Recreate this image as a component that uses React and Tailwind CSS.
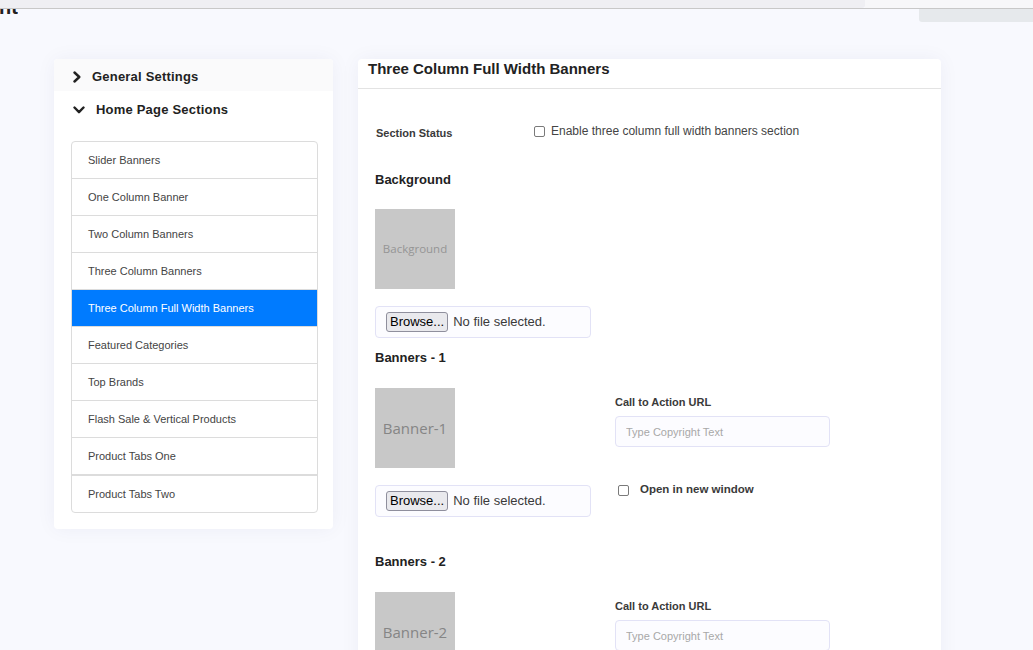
import React from "react";

const sections = [
  "Slider Banners",
  "One Column Banner",
  "Two Column Banners",
  "Three Column Banners",
  "Three Column Full Width Banners",
  "Featured Categories",
  "Top Brands",
  "Flash Sale & Vertical Products",
  "Product Tabs One",
  "Product Tabs Two",
];

function ChevronRight() {
  return (
    <svg width="8" height="12" viewBox="0 0 8 12" fill="none">
      <polyline points="1.5,1.5 6.3,6 1.5,10.5" stroke="#222" strokeWidth="2.4" strokeLinecap="round" strokeLinejoin="round" />
    </svg>
  );
}

function ChevronDown() {
  return (
    <svg width="12" height="8" viewBox="0 0 12 8" fill="none">
      <polyline points="1.5,1.5 6,6.2 10.5,1.5" stroke="#222" strokeWidth="2.4" strokeLinecap="round" strokeLinejoin="round" />
    </svg>
  );
}

function FileBox() {
  return (
    <div className="w-[216px] h-[32px] flex items-center pl-[10px] border border-[#e2e2f6] rounded-[4px] bg-[#fcfcff]">
      <span className="h-[20px] px-[3px] flex items-center border border-[#8f8f9d] rounded-[3px] bg-[#e9e9ed] text-[13px] text-black">
        Browse...
      </span>
      <span className="ml-[5px] text-[13px] text-[#3a3a3a]">No file selected.</span>
    </div>
  );
}

function Placeholder({ label, big }) {
  return (
    <div
      className={`w-[80px] h-[80px] bg-[#c8c8c8] flex items-center justify-center font-['Open_Sans'] ${
        big ? "text-[15px] text-[#858585]" : "text-[11.5px] text-[#959595]"
      }`}
    >
      {label}
    </div>
  );
}

function Checkbox() {
  return <span className="w-[11px] h-[11px] border border-[#7a7a7a] rounded-[2px] bg-white shrink-0" />;
}

function BannerBlock({ n }) {
  return (
    <div className="grid grid-cols-[240px_1fr]">
      <Placeholder label={`Banner-${n}`} big />
      <div className="pt-[7px]">
        <div className="text-[11px] leading-[14px] font-bold text-[#3a3a3a]">Call to Action URL</div>
        <input
          placeholder="Type Copyright Text"
          className="mt-[7px] w-[215px] h-[31px] pl-[10px] border border-[#e2e2f6] rounded-[4px] bg-[#fcfcff] text-[11px] placeholder:text-[#a8a8a8] outline-none"
        />
      </div>
      <div className="mt-[17px]">
        <FileBox />
      </div>
      <div className="mt-[17px] pl-[3px] h-[10px] flex items-center">
        <Checkbox />
        <span className="ml-[11px] text-[11.5px] font-bold text-[#3a3a3a]">Open in new window</span>
      </div>
    </div>
  );
}

export default function App() {
  return (
    <div className="min-h-screen bg-[#f8f9fe] font-['Liberation_Sans',Arial,sans-serif] text-[#333] overflow-hidden">
      <div className="flex h-[8px]">
        <div className="w-[865px] bg-[#efeff3] rounded-br-[3px]" />
        <div className="flex-1 bg-[#f7f7f9]" />
      </div>
      <div className="h-px bg-[#c8c8c8]" />
      <div className="flex justify-between h-[14px]">
        <div className="h-[6px] overflow-hidden leading-none">
          <div className="-mt-[12px] -ml-[1px] text-[20px] font-bold text-[#222]">nt</div>
        </div>
        <div className="w-[114px] h-[13px] bg-[#e6e9ec] rounded-bl-[3px]" />
      </div>

      <div className="flex items-start gap-[25px] pl-[54px] pt-[36px]">
        {/* sidebar */}
        <div className="w-[279px] bg-white rounded-[4px] shadow-[0_0_20px_rgba(30,40,90,0.05)] pb-[16px]">
          <div className="h-[32px] flex items-center pl-[19px] pt-[4px] bg-[#fafafb] rounded-t-[4px]">
            <ChevronRight />
            <span className="ml-[11px] text-[13px] font-bold text-[#222] tracking-[0.2px]">General Settings</span>
          </div>
          <div className="h-[36px] flex items-center pl-[19px] pt-[2px]">
            <ChevronDown />
            <span className="ml-[11px] text-[13px] font-bold text-[#222] tracking-[0.2px]">Home Page Sections</span>
          </div>
          <div className="mt-[14px] ml-[17px] mr-[15px] border border-[#dcdcdc] rounded-[4px] overflow-hidden">
            {sections.map((s, i) => {
              const active = s === "Three Column Full Width Banners";
              const last = i === sections.length - 1;
              return (
                <div
                  key={s}
                  className={`h-[37px] flex items-center pl-[16px] pt-px text-[11px] ${
                    active ? "bg-[#007bff] text-white" : "text-[#444]"
                  } ${last ? "border-t border-[#dcdcdc]" : "border-b border-[#dcdcdc]"}`}
                >
                  {s}
                </div>
              );
            })}
          </div>
        </div>

        {/* main */}
        <div className="w-[583px] min-h-[620px] bg-white rounded-t-[4px] shadow-[0_0_20px_rgba(30,40,90,0.05)]">
          <div className="h-[30px] border-b border-[#e3e3e3] pl-[10px] pt-[1px]">
            <div className="text-[15px] leading-[18px] font-bold text-[#222]">Three Column Full Width Banners</div>
          </div>

          <div className="pl-[17px]">
            <div className="mt-[34px] h-[16px] flex items-center">
              <div className="w-[159px] pl-px text-[11px] font-bold text-[#3a3a3a] pt-[5px]">Section Status</div>
              <Checkbox />
              <span className="ml-[6px] text-[12px] text-[#444]">Enable three column full width banners section</span>
            </div>

            <div className="mt-[33px] text-[13px] leading-[16px] font-bold text-[#222]">Background</div>
            <div className="mt-[21px]">
              <Placeholder label="Background" />
            </div>
            <div className="mt-[17px]">
              <FileBox />
            </div>

            <div className="mt-[12px] text-[13px] leading-[16px] font-bold text-[#222]">Banners - 1</div>
            <div className="mt-[22px]">
              <BannerBlock n={1} />
            </div>

            <div className="mt-[37px] text-[13px] leading-[16px] font-bold text-[#222]">Banners - 2</div>
            <div className="mt-[22px]">
              <BannerBlock n={2} />
            </div>
          </div>
        </div>
      </div>
    </div>
  );
}
